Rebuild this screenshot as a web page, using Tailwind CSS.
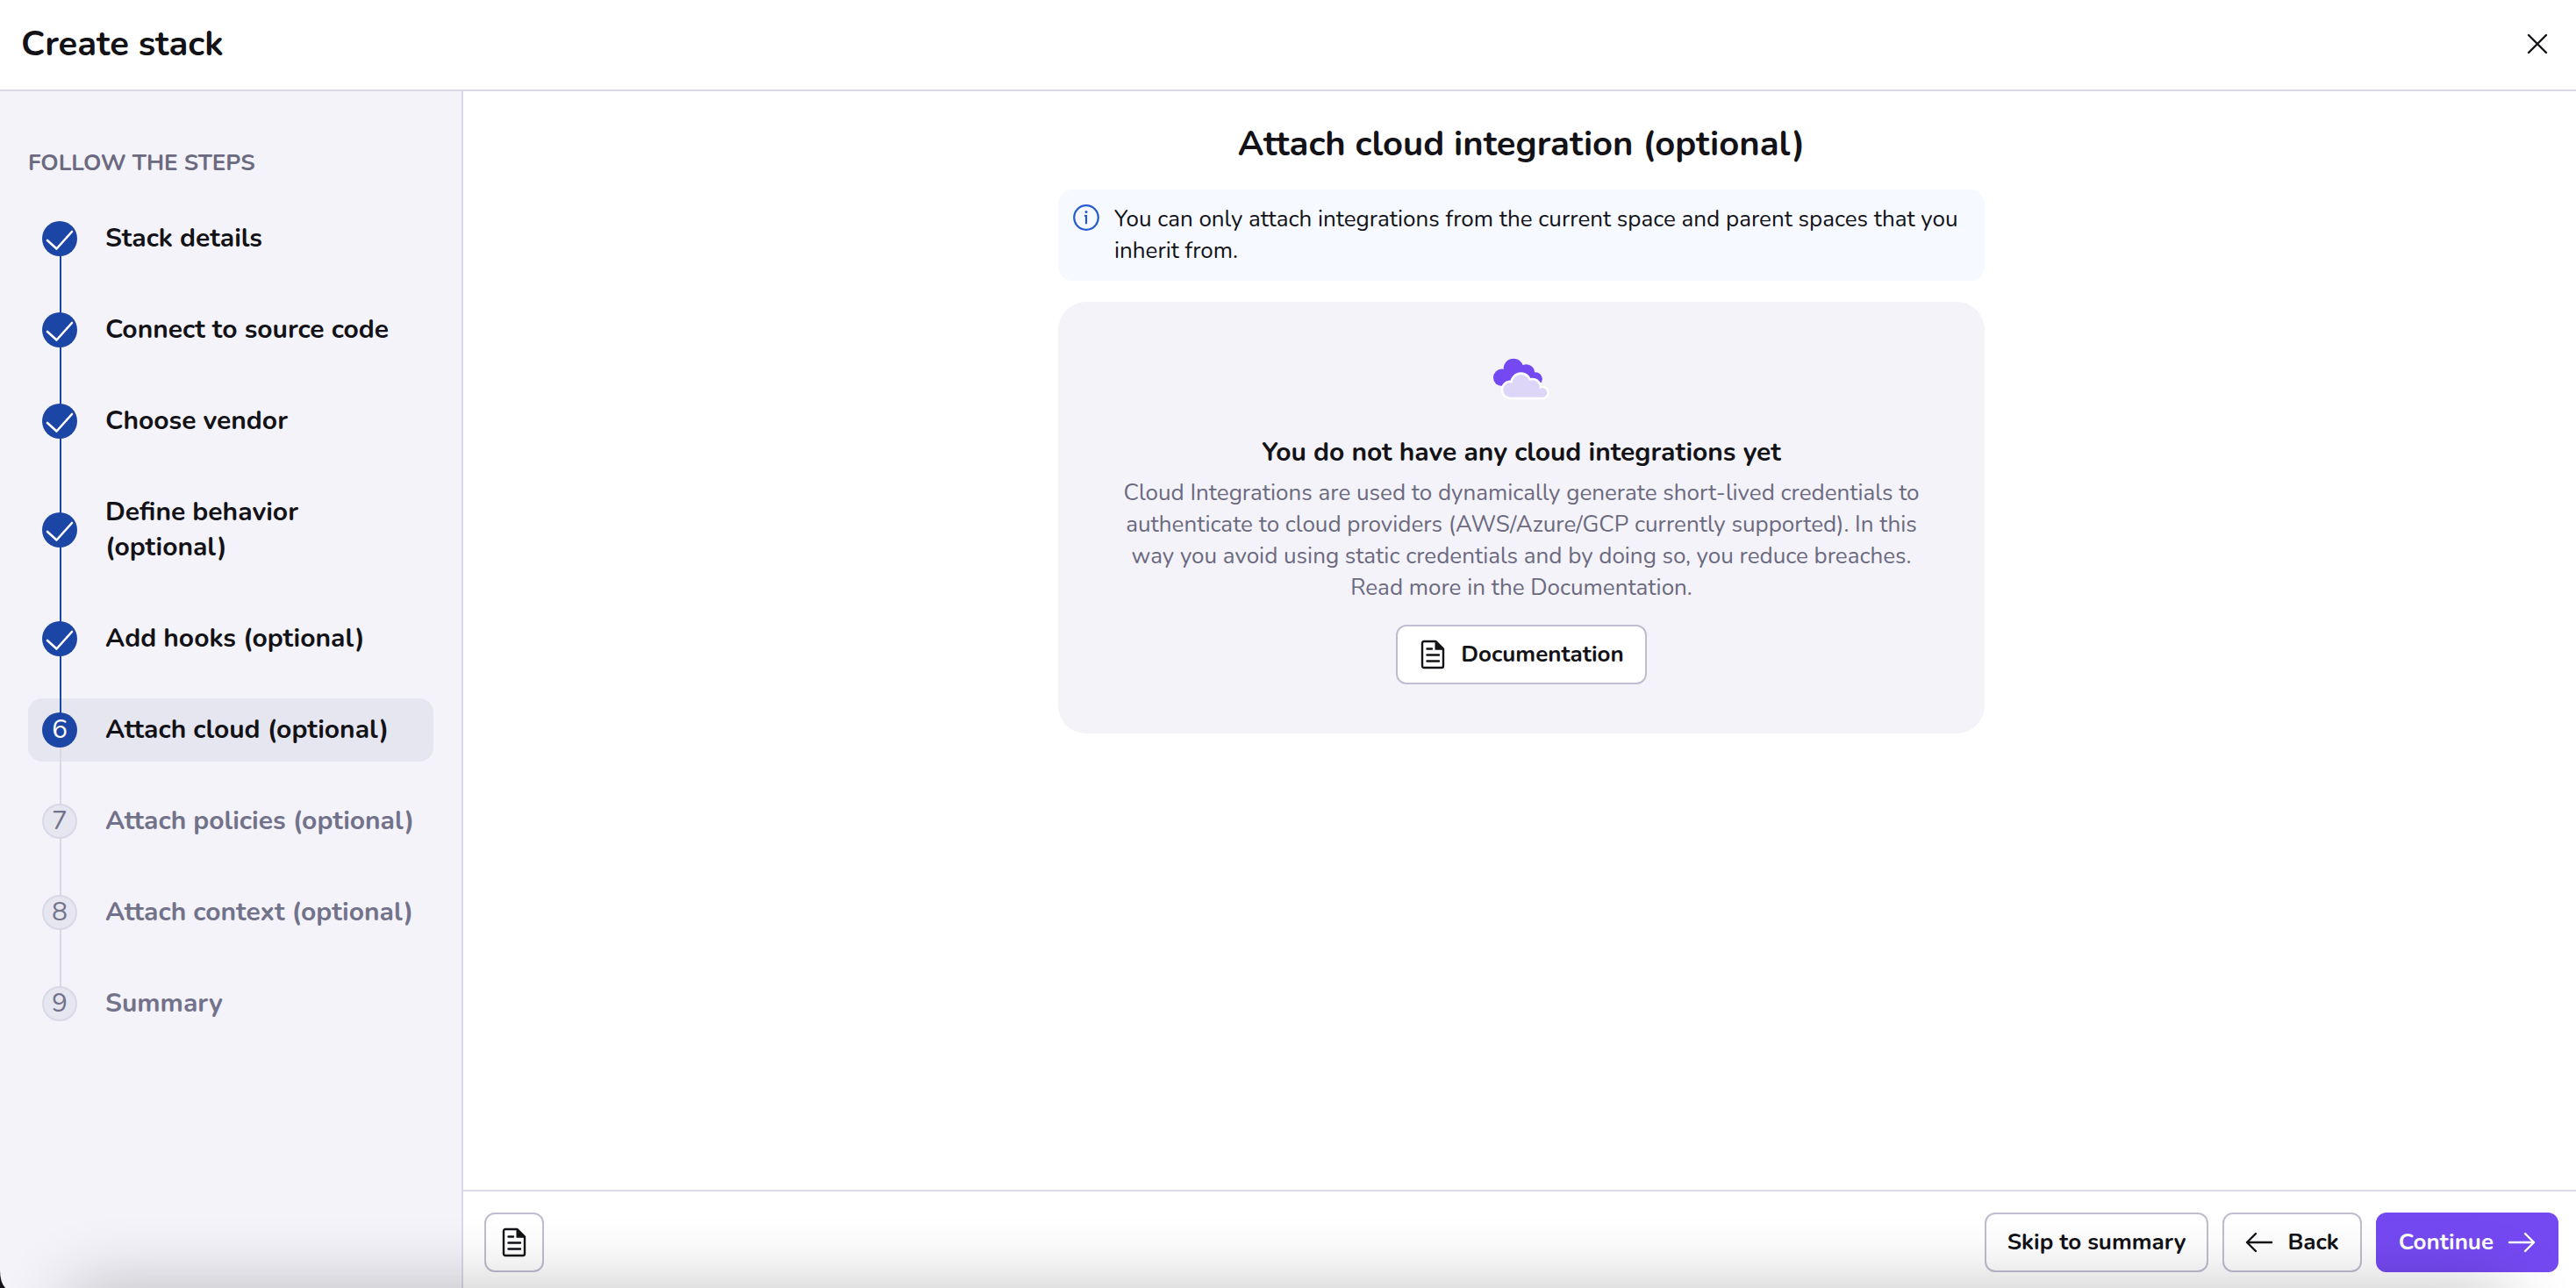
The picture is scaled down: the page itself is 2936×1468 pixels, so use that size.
<!DOCTYPE html>
<html lang="en">
<head>
<meta charset="utf-8">
<meta name="viewport" content="width=device-width, initial-scale=1">
<title>Create stack</title>
<script src="https://cdn.jsdelivr.net/npm/@tailwindcss/browser@4"></script>
</head>
<body class="relative flex h-screen flex-col overflow-hidden bg-white font-['Nunito','Noto_Sans',sans-serif] text-[26px] leading-9 text-[#121217]">

<svg class="hidden" aria-hidden="true">
  <symbol id="check" viewBox="0 0 40 40"><path d="M6 22 16.500 31.500 34 12" fill="none" stroke="currentColor" stroke-width="2.600" stroke-linecap="round" stroke-linejoin="round"/></symbol>
  <symbol id="doc" viewBox="0 0 32 36"><path d="M6 3H19.500L28 11.500V31a2 2 0 0 1-2 2H6a2 2 0 0 1-2-2V5a2 2 0 0 1 2-2Z" fill="none" stroke="currentColor" stroke-width="2.400" stroke-linejoin="round"/><path d="M18.500 2.500 29 12.800H18.500Z" fill="currentColor"/><path d="M9.500 11.500h5.500M9.500 18.500h13.500M9.500 25.500h13.500" stroke="currentColor" stroke-width="2.400" stroke-linecap="round"/></symbol>
</svg>

<header class="flex h-[104px] shrink-0 items-center justify-between border-b-2 border-[#d9d8e6] px-6 pb-0.5">
  <h1 class="text-[40px] leading-12 font-bold">Create stack</h1>
  <button type="button" aria-label="Close" class="flex size-10 items-center justify-center">
    <svg class="size-6" viewBox="0 0 24 24" fill="none" stroke="currentColor" stroke-width="2.400" stroke-linecap="round"><path d="M2 2 22 22M22 2 2 22"/></svg>
  </button>
</header>

<div class="flex min-h-0 flex-1">
  <aside class="w-[528px] shrink-0 border-r-2 border-[#d9d8e6] bg-[#f4f3f9] px-8 pt-16">
    <h2 class="text-[26px] leading-9 font-bold text-[#6b6a80] uppercase">Follow the steps</h2>
    <ol class="mt-8 flex flex-col gap-8 text-[30px] leading-10 font-bold">
      <li class="relative flex items-center gap-8 p-4">
        <span class="absolute top-1/2 -bottom-4 left-9 w-0.5 bg-[#1c46a6]"></span>
        <span class="relative size-10 shrink-0 rounded-full bg-[#1c46a6] text-white"><svg class="size-10"><use href="#check"/></svg></span>
        <span>Stack details</span>
      </li>
      <li class="relative flex items-center gap-8 p-4">
        <span class="absolute -top-4 -bottom-4 left-9 w-0.5 bg-[#1c46a6]"></span>
        <span class="relative size-10 shrink-0 rounded-full bg-[#1c46a6] text-white"><svg class="size-10"><use href="#check"/></svg></span>
        <span>Connect to source code</span>
      </li>
      <li class="relative flex items-center gap-8 p-4">
        <span class="absolute -top-4 -bottom-4 left-9 w-0.5 bg-[#1c46a6]"></span>
        <span class="relative size-10 shrink-0 rounded-full bg-[#1c46a6] text-white"><svg class="size-10"><use href="#check"/></svg></span>
        <span>Choose vendor</span>
      </li>
      <li class="relative flex items-center gap-8 p-4">
        <span class="absolute -top-4 -bottom-4 left-9 w-0.5 bg-[#1c46a6]"></span>
        <span class="relative size-10 shrink-0 rounded-full bg-[#1c46a6] text-white"><svg class="size-10"><use href="#check"/></svg></span>
        <span>Define behavior (optional)</span>
      </li>
      <li class="relative flex items-center gap-8 p-4">
        <span class="absolute -top-4 -bottom-4 left-9 w-0.5 bg-[#1c46a6]"></span>
        <span class="relative size-10 shrink-0 rounded-full bg-[#1c46a6] text-white"><svg class="size-10"><use href="#check"/></svg></span>
        <span>Add hooks (optional)</span>
      </li>
      <li class="relative flex items-center gap-8 rounded-2xl bg-[#e6e6f0] p-4" aria-current="step">
        <span class="absolute -top-4 bottom-1/2 left-9 w-0.5 bg-[#1c46a6]"></span>
        <span class="absolute top-1/2 -bottom-4 left-9 w-0.5 bg-[#d9d8e6]"></span>
        <span class="relative flex size-10 shrink-0 items-center justify-center rounded-full bg-[#1c46a6] font-normal text-white">6</span>
        <span>Attach cloud (optional)</span>
      </li>
      <li class="relative flex items-center gap-8 p-4 text-[#72728a]">
        <span class="absolute -top-4 -bottom-4 left-9 w-0.5 bg-[#d9d8e6]"></span>
        <span class="relative flex size-10 shrink-0 items-center justify-center rounded-full border-2 border-[#d9d8e6] bg-[#e6e6f0] font-normal">7</span>
        <span>Attach policies (optional)</span>
      </li>
      <li class="relative flex items-center gap-8 p-4 text-[#72728a]">
        <span class="absolute -top-4 -bottom-4 left-9 w-0.5 bg-[#d9d8e6]"></span>
        <span class="relative flex size-10 shrink-0 items-center justify-center rounded-full border-2 border-[#d9d8e6] bg-[#e6e6f0] font-normal">8</span>
        <span>Attach context (optional)</span>
      </li>
      <li class="relative flex items-center gap-8 p-4 text-[#72728a]">
        <span class="absolute -top-4 bottom-1/2 left-9 w-0.5 bg-[#d9d8e6]"></span>
        <span class="relative flex size-10 shrink-0 items-center justify-center rounded-full border-2 border-[#d9d8e6] bg-[#e6e6f0] font-normal">9</span>
        <span>Summary</span>
      </li>
    </ol>
  </aside>

  <div class="flex min-w-0 flex-1 flex-col">
    <main class="min-h-0 flex-1 pt-9 pl-1">
      <div class="mx-auto flex w-full max-w-[1056px] flex-col gap-6">
        <h2 class="mb-1 text-center text-[40px] leading-12 font-bold">Attach cloud integration (optional)</h2>
        <div class="flex gap-4 rounded-2xl bg-[#f6f9ff] py-4 pr-6 pl-4" role="note">
          <svg class="size-8 shrink-0 text-[#2459cf]" viewBox="0 0 32 32" fill="none" stroke="currentColor" stroke-width="2.200" stroke-linecap="round"><circle cx="16" cy="16" r="13.800"/><path d="M14.800 14H16v8.500"/><circle cx="16" cy="9.600" r="1.500" fill="currentColor" stroke="none"/></svg>
          <p>You can only attach integrations from the current space and parent spaces that you inherit from.</p>
        </div>
        <section class="flex flex-col items-center rounded-[32px] bg-[#f4f3f9] px-16 py-14 text-center">
          <svg class="size-16" viewBox="0 0 64 64" aria-hidden="true">
            <g fill="#7549f2"><circle cx="9.700" cy="30.300" r="9.700"/><circle cx="23" cy="20" r="11.300"/><circle cx="37.500" cy="25" r="9.800"/><circle cx="48" cy="32" r="7.800"/><path d="M9.700 40V28L24 20 48 28V39.800Z"/></g>
            <g id="front-cloud" fill="#fff" stroke="#fff" stroke-width="5.200"><circle cx="19.500" cy="44.400" r="8.300"/><circle cx="31.500" cy="36.700" r="9.800"/><circle cx="44.500" cy="41.600" r="8.300"/><circle cx="56" cy="47.400" r="5.300"/><path d="M19.500 52.700V42L32 36l14 5 10 4V52.700Z"/></g>
            <g fill="#ddd6f8"><circle cx="19.500" cy="44.400" r="8.300"/><circle cx="31.500" cy="36.700" r="9.800"/><circle cx="44.500" cy="41.600" r="8.300"/><circle cx="56" cy="47.400" r="5.300"/><path d="M19.500 52.700V42L32 36l14 5 10 4V52.700Z"/></g>
          </svg>
          <h3 class="mt-8 text-[30px] leading-10 font-bold">You do not have any cloud integrations yet</h3>
          <p class="mt-2 text-[#6b6a80]">Cloud Integrations are used to dynamically generate short-lived credentials to authenticate to cloud providers (AWS/Azure/GCP currently supported). In this way you avoid using static credentials and by doing so, you reduce breaches. Read more in the Documentation.</p>
          <a href="#" class="mt-6 flex h-[68px] items-center gap-4 rounded-xl border-2 border-[#bfbdd0] bg-white px-6 font-bold"><svg class="h-9 w-8"><use href="#doc"/></svg>Documentation</a>
        </section>
      </div>
    </main>

    <footer class="flex h-28 shrink-0 items-start gap-4 border-t-2 border-[#d9d8e6] pt-6 pr-5 pl-6 font-bold">
      <button type="button" aria-label="Documentation" class="mr-auto flex size-[68px] items-center justify-center rounded-xl border-2 border-[#bfbdd0]"><svg class="h-9 w-8"><use href="#doc"/></svg></button>
      <button type="button" class="h-[68px] rounded-xl border-2 border-[#bfbdd0] px-6">Skip to summary</button>
      <button type="button" class="flex h-[68px] items-center gap-4 rounded-xl border-2 border-[#bfbdd0] px-6">
        <svg class="size-8" viewBox="0 0 32 32" fill="none" stroke="currentColor" stroke-width="2.400" stroke-linecap="round" stroke-linejoin="round"><path d="M30 16H2M12 6 2 16l10 10"/></svg>Back</button>
      <button type="button" class="flex h-[68px] items-center gap-4 rounded-xl border-2 border-[#7549f2] bg-[#7549f2] px-6 text-white">Continue
        <svg class="size-8" viewBox="0 0 32 32" fill="none" stroke="currentColor" stroke-width="2.400" stroke-linecap="round" stroke-linejoin="round"><path d="M2 16h28M20 6l10 10-10 10"/></svg></button>
    </footer>
  </div>
</div>

<!-- Shade along the bottom edge of the window, and its rounded corner -->
<div class="pointer-events-none absolute inset-0 overflow-hidden">
  <div class="absolute top-full right-20 left-20 h-40 shadow-[0_0_80px_rgba(0,0,0,0.24)]"></div>
  <svg class="absolute bottom-0 left-0 h-5 w-2" viewBox="0 0 8 20"><path d="M0 0Q0 13 6 20H0Z" fill="#121217"/></svg>
</div>
</body>
</html>
